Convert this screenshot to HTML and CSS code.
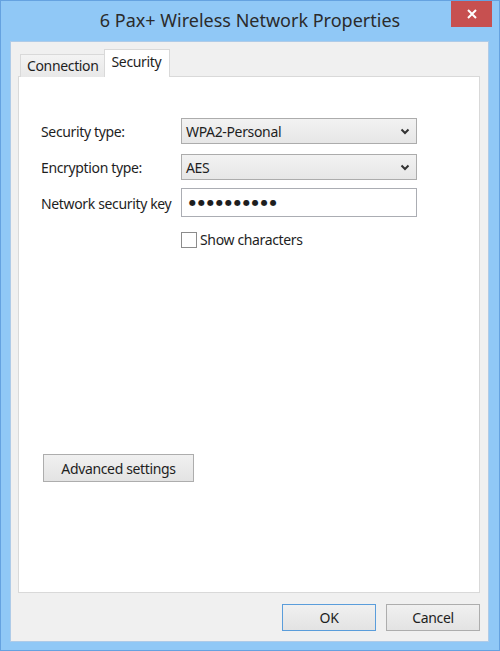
FILE: index.html
```html
<!DOCTYPE html>
<html>
<head>
<meta charset="utf-8">
<link rel="stylesheet" href="styles.css">
</head>
<body>
<div class="window">
  <div class="titlebar">
    <div class="spacer"></div>
    <div class="title">6 Pax+ Wireless Network Properties</div>
    <div class="controls">
      <div class="close">
        <svg width="12" height="12" viewBox="0 0 12 12"><path d="M2 2 L10 10 M10 2 L2 10" stroke="#fff" stroke-width="2" fill="none"/></svg>
      </div>
    </div>
  </div>
  <div class="client">
    <div class="tabs">
      <div class="tab">Connection</div>
      <div class="tab active">Security</div>
    </div>
    <div class="panel">
      <div class="form">
        <div class="label">Security type:</div>
        <div class="combo"><span>WPA2-Personal</span><svg width="10" height="7" viewBox="0 0 10 7"><path d="M1.5 1.5 L5 5 L8.5 1.5" stroke="#333" stroke-width="2" fill="none"/></svg></div>
        <div class="label">Encryption type:</div>
        <div class="combo"><span>AES</span><svg width="10" height="7" viewBox="0 0 10 7"><path d="M1.5 1.5 L5 5 L8.5 1.5" stroke="#333" stroke-width="2" fill="none"/></svg></div>
        <div class="label">Network security key</div>
        <div class="input"><span class="dots">●●●●●●●●●●</span></div>
        <div></div>
        <label class="check"><span class="box"></span><span>Show characters</span></label>
      </div>
      <div class="adv-row">
        <div class="btn adv">Advanced settings</div>
      </div>
    </div>
    <div class="footer">
      <div class="btn ok">OK</div>
      <div class="btn">Cancel</div>
    </div>
  </div>
</div>
</body>
</html>
```

FILE: styles.css
```css
html, body {
  margin: 0;
  padding: 0;
}
body {
  width: 500px;
  height: 651px;
  font-family: "Noto Sans", "Open Sans", sans-serif;
  color: #1e1e1e;
}
.window {
  box-sizing: border-box;
  width: 500px;
  height: 651px;
  background: #90c8f6;
  border: 1px solid #65a2e0;
  display: flex;
  flex-direction: column;
}
.titlebar {
  height: 40px;
  display: grid;
  grid-template-columns: 1fr auto 1fr;
  align-items: start;
}
.title {
  font-size: 18px;
  color: #2b2b2b;
  margin-top: 7px;
  white-space: nowrap;
}
.controls {
  display: flex;
  justify-content: flex-end;
  padding-right: 7px;
}
.close {
  width: 41px;
  height: 26px;
  background: #c75050;
  display: flex;
  align-items: center;
  justify-content: center;
}
.client {
  flex: 1;
  margin: 0 10px 8px 9px;
  background: #f0f0f0;
  border: 1px solid #aecbe8;
  display: flex;
  flex-direction: column;
  padding: 7px 8px 0 7px;
  letter-spacing: -0.35px;
}
.tabs {
  display: flex;
  align-items: flex-end;
  height: 28px;
  margin-bottom: -1px;
  padding-left: 2px;
  position: relative;
  z-index: 1;
}
.tab {
  font-size: 14px;
  height: 23px;
  line-height: 22px;
  padding: 0 5px 0 6px;
  box-sizing: border-box;
  border: 1px solid #d9d9d9;
  border-bottom: none;
  background: linear-gradient(#f3f3f3, #e8e8e8);
  color: #1e1e1e;
}
.tab.active {
  height: 28px;
  line-height: 24px;
  background: #fff;
  padding: 0 8px 0 7px;
  border-left: 1px solid #d9d9d9;
  margin-left: -1px;
}
.panel {
  height: 517px;
  box-sizing: border-box;
  background: #fff;
  border: 1px solid #d9d9d9;
  padding: 41px 0 0 22px;
  display: flex;
  flex-direction: column;
}
.form {
  display: grid;
  grid-template-columns: 140px 236px;
  row-gap: 10px;
  align-items: center;
  font-size: 14px;
}
.label {
  white-space: nowrap;
}
.combo {
  box-sizing: border-box;
  height: 26px;
  border: 1px solid #acacac;
  background: linear-gradient(#f2f2f2, #e6e6e6);
  display: flex;
  align-items: center;
  justify-content: space-between;
  padding: 0 6px 0 4px;
}
.input {
  box-sizing: border-box;
  height: 29px;
  border: 1px solid #abadb3;
  background: #fff;
  display: flex;
  align-items: center;
  padding-left: 7px;
  margin-top: -2px;
}
.dots {
  font-family: "DejaVu Sans", sans-serif;
  font-size: 8px;
  letter-spacing: 2px;
  color: #1e1e1e;
}
.check {
  display: flex;
  align-items: center;
  gap: 3px;
  margin-top: 3px;
}
.box {
  width: 14px;
  height: 14px;
  border: 1px solid #8c8c8c;
  background: #fff;
}
.adv-row {
  margin-top: 205px;
  display: flex;
}
.btn {
  box-sizing: border-box;
  font-size: 14px;
  height: 28px;
  border: 1px solid #adadad;
  background: linear-gradient(#f0f0f0, #e3e3e3);
  display: flex;
  align-items: center;
  justify-content: center;
}
.adv {
  width: 151px;
  margin-left: 2px;
}
.footer {
  display: flex;
  justify-content: flex-end;
  gap: 10px;
  padding-top: 11px;
  padding-right: 0;
}
.footer .btn {
  width: 94px;
  height: 27px;
}
.footer .btn.ok {
  border-color: #5a9ddb;
}
```
